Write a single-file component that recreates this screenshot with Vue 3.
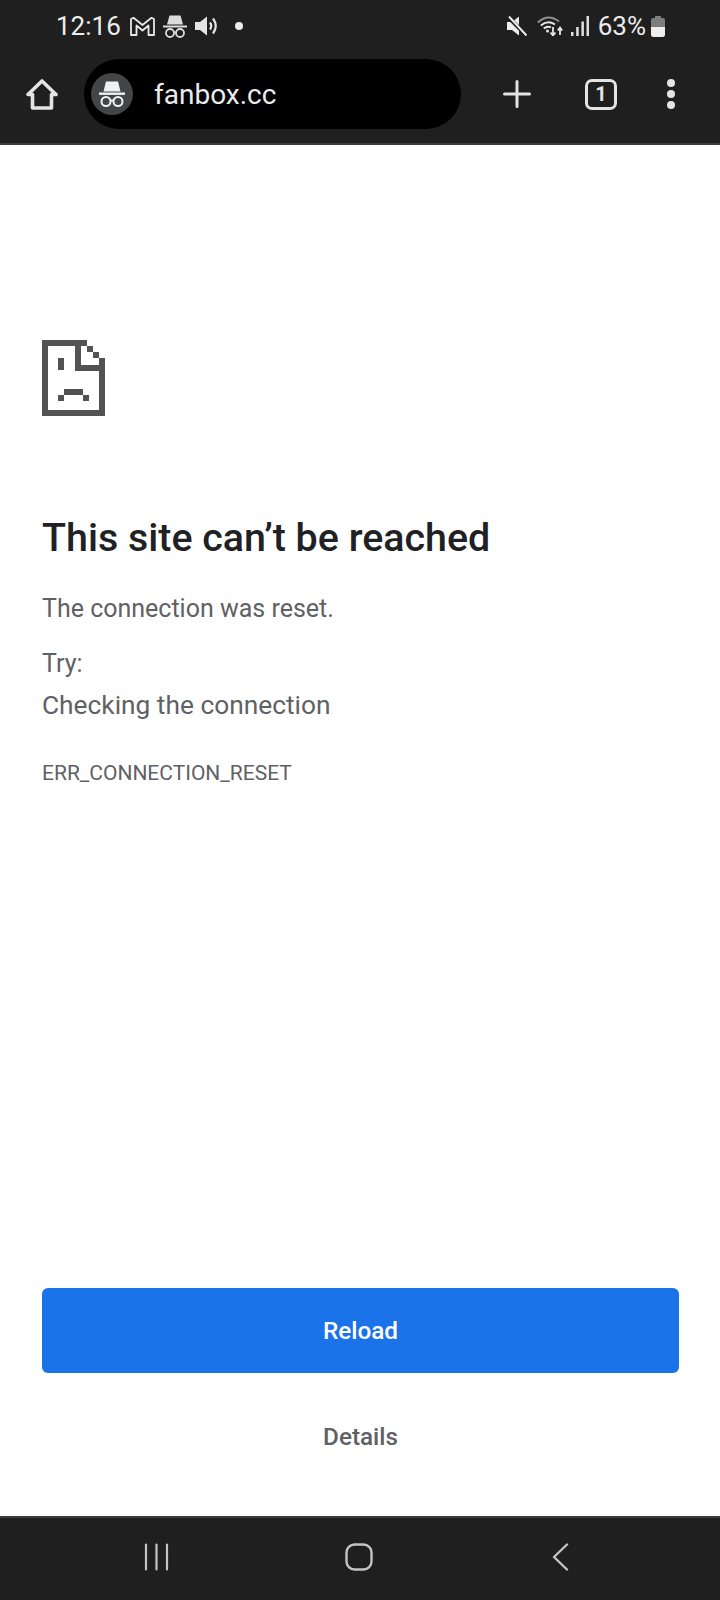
<template>
  <div class="screen">
    <header class="chrome">
      <div class="status">
        <span class="time">12:16</span>
        <svg class="ic-gmail" width="25" height="19" viewBox="0 0 25 19" fill="none" stroke="#e8e8e8" stroke-width="1.800" stroke-linejoin="round">
          <path d="M1 18V2L3.500 0.800 12.500 8 21.500 0.800 24 2V18H18.500V8.500L12.500 13.500 6.500 8.500V18Z" />
        </svg>
        <svg class="ic-spy" width="24" height="23" viewBox="0 0 24 23" fill="#dcdcdc">
          <path d="M6.500 0.500H17.500L20 9.500H4Z" />
          <rect x="0" y="10.500" width="24" height="2" />
          <g fill="none" stroke="#dcdcdc" stroke-width="1.800">
            <circle cx="7" cy="18" r="4" />
            <circle cx="17" cy="18" r="4" />
            <path d="M11 17.500Q12 16.800 13 17.500" />
          </g>
        </svg>
        <svg class="ic-sound" width="23" height="20" viewBox="0 0 23 20" fill="#e4e4e4">
          <path d="M0 6H5L12 0.500V19.500L5 14H0Z" />
          <g fill="none" stroke="#e4e4e4" stroke-width="2.200">
            <path d="M15 6.500Q17.500 10 15 13.500" />
            <path d="M18 2.500Q23.500 10 18 17.500" />
          </g>
        </svg>
        <span class="dot"></span>
        <span class="spacer"></span>
        <svg class="ic-mute" width="20" height="20" viewBox="0 0 20 20" fill="#ececec">
          <path d="M0 6H5L12 0.500V19.500L5 14H0Z" />
          <path d="M1 1L19 19" stroke="#1f1f1f" stroke-width="4" />
          <path d="M2 0.500L19.500 19.500" stroke="#ececec" stroke-width="2" />
        </svg>
        <svg class="ic-wifi" width="27" height="20" viewBox="0 0 27 20" fill="none">
          <path d="M0.800 6.500Q11 -3 22 5.500" stroke="#8f8f8f" stroke-width="2" />
          <path d="M3.800 9.500Q10.500 3.500 18 8.500" stroke="#e4e4e4" stroke-width="2" />
          <path d="M6.800 12.500Q10.500 9.500 14 11.500" stroke="#e4e4e4" stroke-width="2" />
          <circle cx="10.500" cy="15" r="1.500" fill="#e4e4e4" />
          <path d="M16 11V19M13.500 16.500L16 19.500 18.500 16.500" stroke="#e4e4e4" stroke-width="1.800" />
          <path d="M23 19V12M20.800 14.500L23 11.500 25.200 14.500" stroke="#e4e4e4" stroke-width="1.800" />
        </svg>
        <svg class="ic-signal" width="18" height="20" viewBox="0 0 18 20" fill="#e0e0e0">
          <rect x="0" y="16" width="2.500" height="4" />
          <rect x="5.200" y="11" width="2.500" height="9" />
          <rect x="10.400" y="5.500" width="2.500" height="14.500" />
          <rect x="15.500" y="0" width="2.500" height="20" />
        </svg>
        <span class="pct">63%</span>
        <svg class="ic-batt" width="14" height="21" viewBox="0 0 14 21">
          <path d="M4 0H10V2H12Q14 2 14 4V11H0V4Q0 2 2 2H4Z" fill="#7e7e7e" />
          <path d="M0 11H14V18.500Q14 21 11.500 21H2.500Q0 21 0 18.500Z" fill="#eeeeee" />
        </svg>
      </div>

      <div class="toolbar">
        <svg class="home" width="32" height="31" viewBox="0 0 32 31" fill="none" stroke="#e4e4e4" stroke-width="3.600" stroke-linejoin="round" stroke-linecap="round">
          <path d="M16 2L30 15.500H25.500V29H6.500V15.500H2Z" />
        </svg>
        <div class="omnibox">
          <span class="badge">
            <svg width="28" height="26" viewBox="0 0 28 26" fill="#f1f1f1">
              <path d="M8 0.500H20L22.500 10.500H5.500Z" />
              <rect x="1" y="11.500" width="26" height="2.400" />
              <g fill="none" stroke="#f1f1f1" stroke-width="2">
                <circle cx="8" cy="20.500" r="4.500" />
                <circle cx="20" cy="20.500" r="4.500" />
                <path d="M12.500 19.800Q14 19 15.500 19.800" />
              </g>
            </svg>
          </span>
          <span class="host">fanbox.cc</span>
        </div>
        <svg class="plus" width="28" height="28" viewBox="0 0 28 28" fill="none" stroke="#e4e4e4" stroke-width="3" stroke-linecap="round">
          <path d="M14 1.500V26.500M1.500 14H26.500" />
        </svg>
        <span class="tabs">1</span>
        <span class="menu"><i></i><i></i><i></i></span>
      </div>
    </header>

    <main class="page">
      <svg class="sad" width="63" height="76" viewBox="42 340 63 76" fill="#535353" shape-rendering="crispEdges">
        <path d="M42 340H87V346H81V365H105V416H42ZM48 346V410H99V371H75V346Z" />
        <rect x="87" y="346" width="6" height="6" />
        <rect x="93" y="352" width="6" height="6" />
        <rect x="99" y="358" width="6" height="8" />
        <rect x="58" y="358" width="6" height="12" />
        <rect x="64" y="389" width="19" height="6" />
        <rect x="58" y="395" width="6" height="6" />
        <rect x="83" y="395" width="6" height="6" />
      </svg>
      <h1>This site can’t be reached</h1>
      <p class="reason">The connection was reset.</p>
      <p class="try">Try:</p>
      <p class="hint">Checking the connection</p>
      <p class="code">ERR_CONNECTION_RESET</p>
      <div class="grow"></div>
      <button class="reload">Reload</button>
      <button class="details">Details</button>
    </main>

    <footer class="nav">
      <svg width="25" height="28" viewBox="0 0 25 28" fill="none" stroke="#c4c4c4" stroke-width="2.200" stroke-linecap="round">
        <path d="M2 1.500V26.500M12.500 1.500V26.500M23 1.500V26.500" />
      </svg>
      <svg class="nav-home" width="28" height="28" viewBox="0 0 28 28" fill="none" stroke="#c4c4c4" stroke-width="2.400">
        <rect x="1.500" y="1.500" width="25" height="25" rx="8" />
      </svg>
      <svg class="nav-back" width="17" height="28" viewBox="0 0 17 28" fill="none" stroke="#c4c4c4" stroke-width="2.400" stroke-linecap="round" stroke-linejoin="round">
        <path d="M15 1.500L2 14L15 26.500" />
      </svg>
    </footer>
  </div>
</template>

<script setup>
</script>

<style>
html, body {
  margin: 0;
  background: #fff;
}
</style>

<style scoped>
.screen {
  width: 720px;
  height: 1600px;
  display: flex;
  flex-direction: column;
  font-family: Roboto, "Liberation Sans", sans-serif;
  overflow: hidden;
}

.chrome {
  background: #1f1f1f;
  border-bottom: 2px solid #3c3c3c;
}

.status {
  box-sizing: border-box;
  height: 46px;
  padding: 6px 55px 0 56px;
  display: flex;
  align-items: center;
  color: #ececec;
}

.time {
  font-size: 26px;
  width: 74px;
}

.ic-spy {
  margin-left: 8px;
}

.ic-sound {
  margin-left: 8px;
}

.dot {
  width: 8px;
  height: 8px;
  border-radius: 50%;
  background: #ececec;
  margin-left: 17px;
}

.spacer {
  flex: 1;
}

.ic-wifi {
  margin-left: 10px;
}

.ic-signal {
  margin-left: 7px;
}

.pct {
  font-size: 26px;
  margin-left: 9px;
}

.ic-batt {
  margin-left: 5px;
}

.toolbar {
  padding: 13px 0 14px 26px;
  display: flex;
  align-items: center;
}

.omnibox {
  width: 377px;
  height: 70px;
  margin-left: 26px;
  border-radius: 35px;
  background: #000;
  display: flex;
  align-items: center;
  padding-left: 7px;
  box-sizing: border-box;
}

.badge {
  width: 42px;
  height: 42px;
  border-radius: 50%;
  background: #444547;
  display: flex;
  align-items: center;
  justify-content: center;
}

.host {
  margin-left: 21px;
  font-size: 28px;
  color: #e8eaed;
}

.plus {
  margin-left: 42px;
}

.tabs {
  box-sizing: border-box;
  width: 32px;
  height: 31px;
  margin-left: 54px;
  border: 3px solid #e4e4e4;
  border-radius: 7px;
  color: #e4e4e4;
  font-size: 20px;
  font-weight: 700;
  display: flex;
  align-items: center;
  justify-content: center;
}

.menu {
  margin-left: 50px;
  display: flex;
  flex-direction: column;
  gap: 3px;
}

.menu i {
  width: 8px;
  height: 8px;
  border-radius: 50%;
  background: #e4e4e4;
}

.page {
  flex: 1;
  display: flex;
  flex-direction: column;
  align-items: flex-start;
  padding: 195px 41px 0 42px;
  background: #fff;
}

.sad {
  display: block;
}

h1 {
  margin: 98px 0 0;
  font-size: 39.4px;
  line-height: 48px;
  font-weight: 500;
  color: #202124;
}

p {
  margin: 0;
  color: #5f6164;
  font-size: 25px;
  line-height: 34px;
}

.reason {
  margin-top: 30px;
}

.try {
  margin-top: 21px;
}

.hint {
  margin-top: 7px;
  font-size: 26.3px;
}

.code {
  margin-top: 37px;
  font-size: 21px;
  line-height: 28px;
}

.grow {
  flex: 1;
}

button {
  font-family: inherit;
  font-weight: 500;
  font-size: 24.3px;
  border: none;
  width: 100%;
  padding: 0;
}

.reload {
  height: 85px;
  border-radius: 6px;
  background: #1a73e8;
  color: #fff;
}

.details {
  height: 34px;
  margin: 46px 0 63px;
  background: none;
  color: #5f6164;
}

.nav {
  box-sizing: border-box;
  height: 84px;
  border-top: 2px solid #3c3c3c;
  background: #1f1f1f;
  display: flex;
  align-items: flex-start;
  padding: 25px 0 0 144px;
}

.nav-home {
  margin-left: 176px;
}

.nav-back {
  margin-left: 179px;
}
</style>
